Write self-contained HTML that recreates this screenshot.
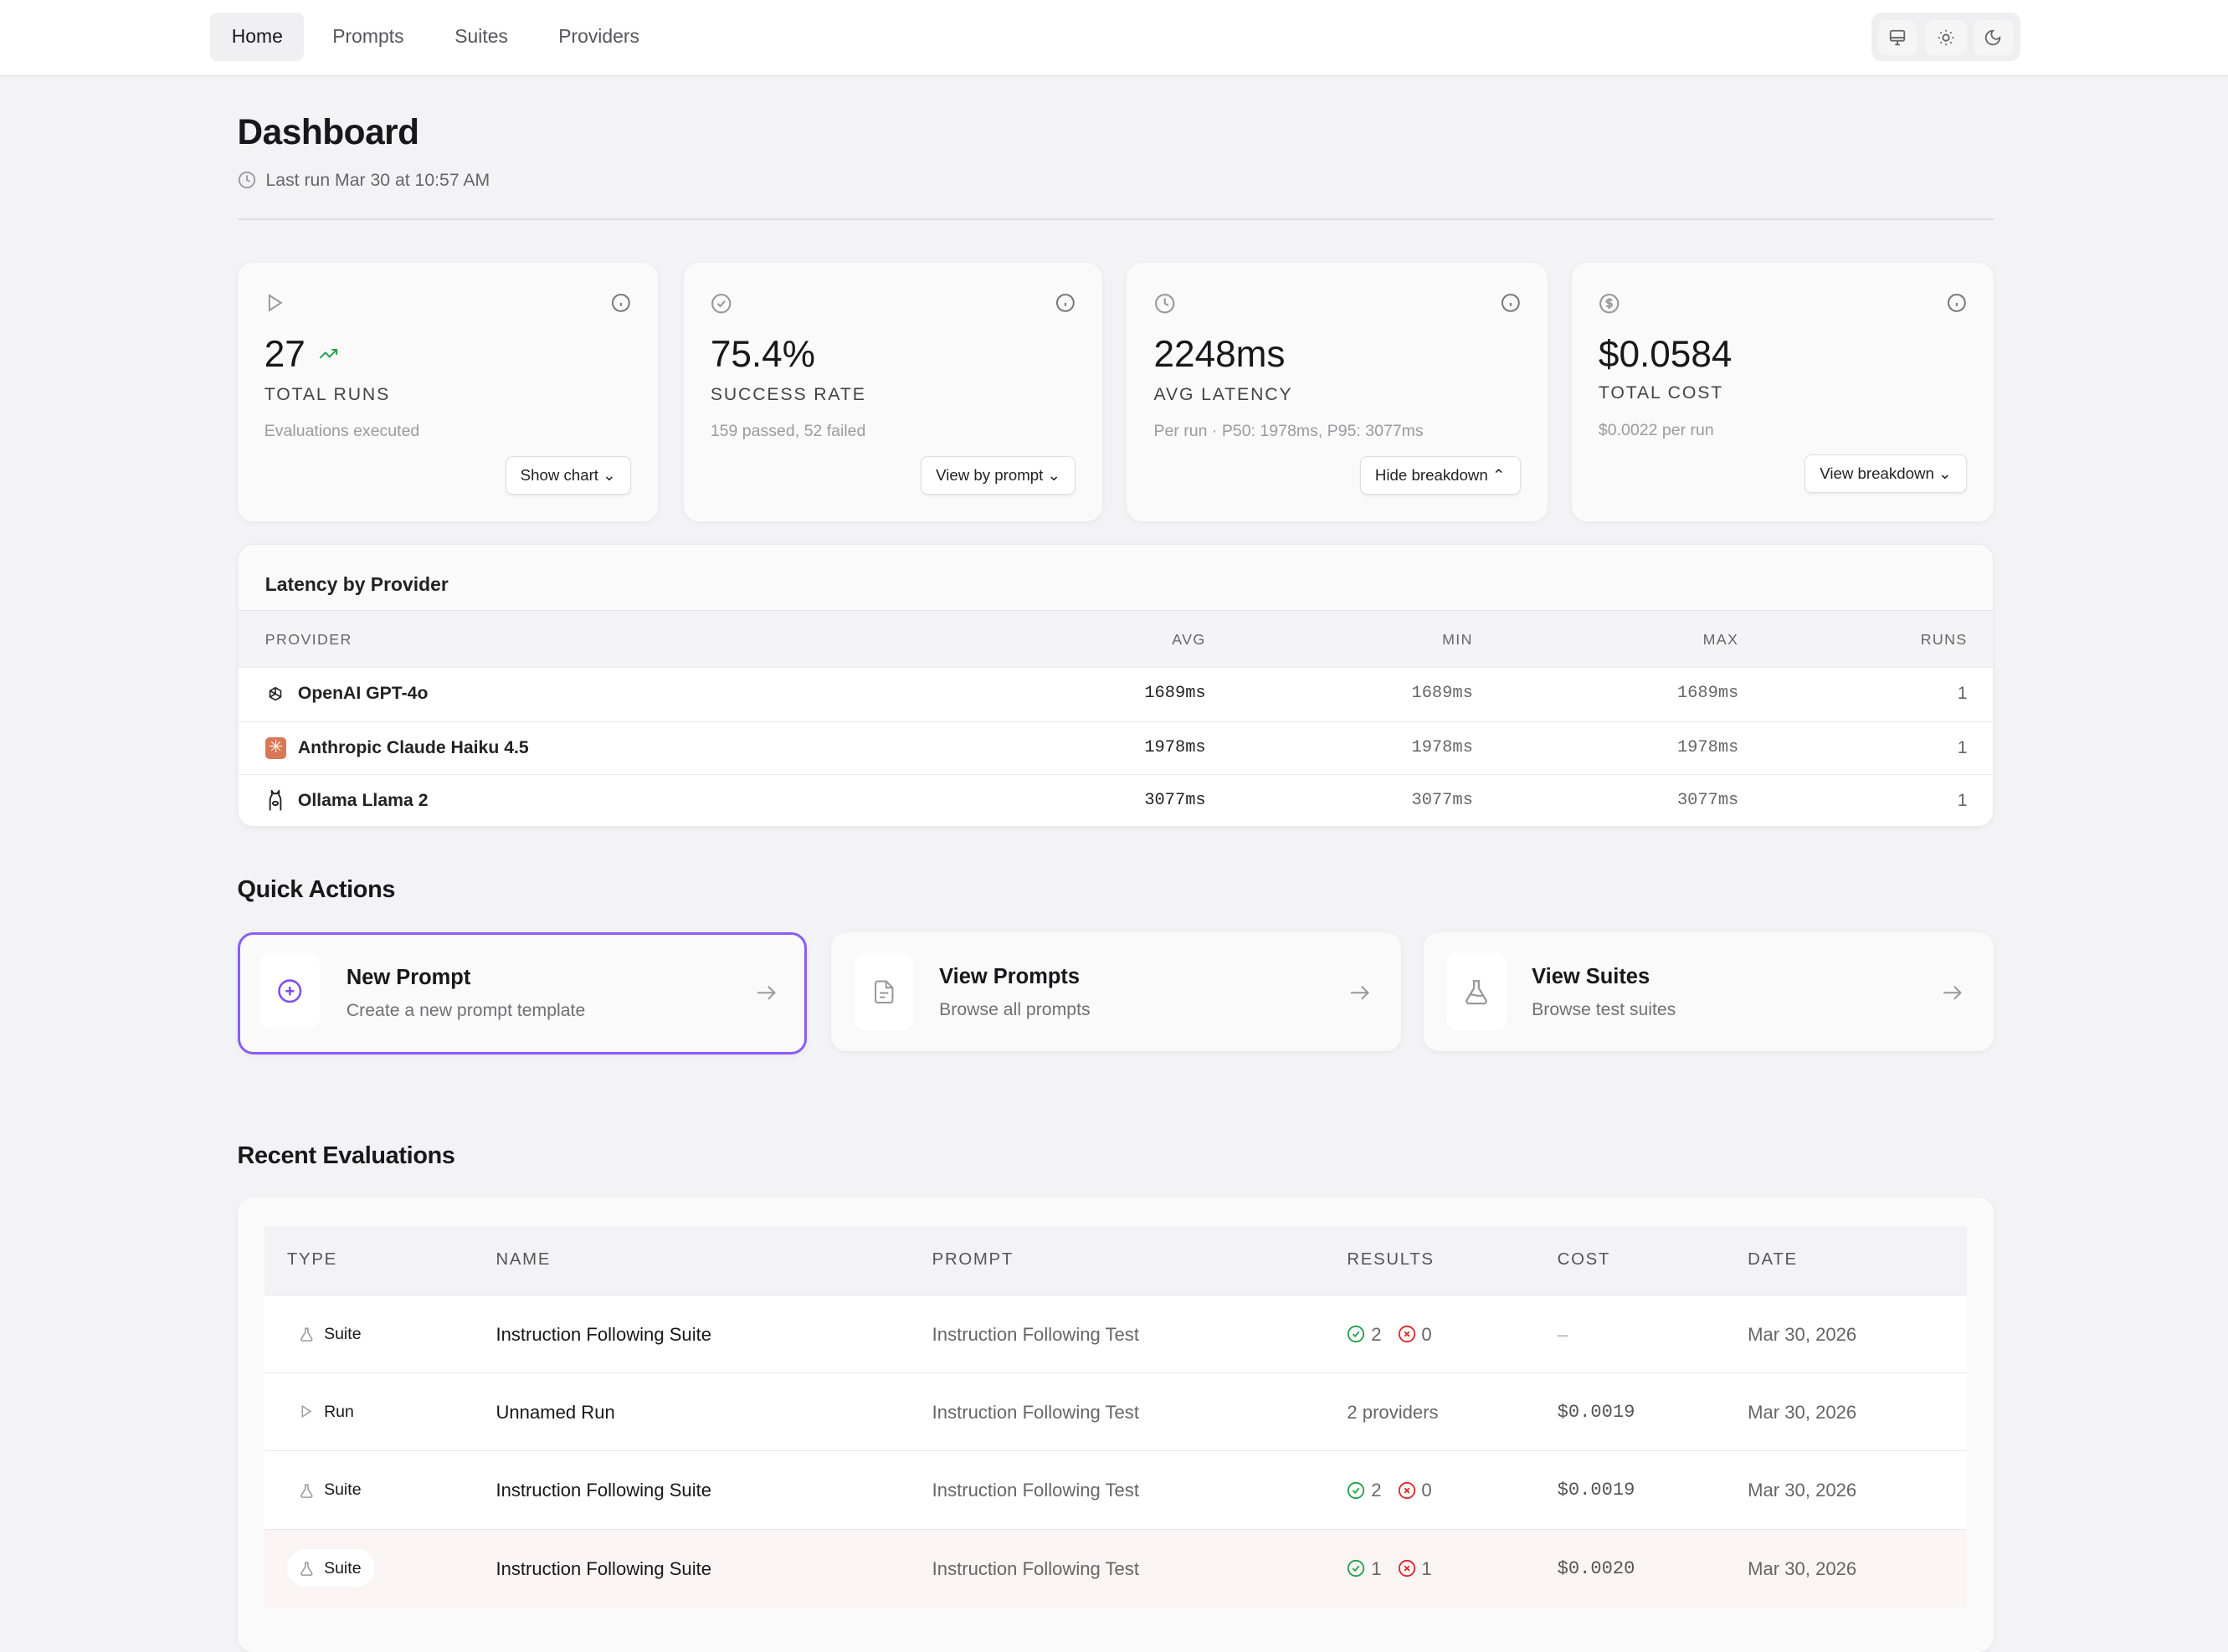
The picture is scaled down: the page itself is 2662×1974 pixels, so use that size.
<!DOCTYPE html>
<html><head><meta charset="utf-8">
<style>
html,body{margin:0;padding:0}
body{width:1568px;height:1129px;overflow:hidden;zoom:1.69770;background:#f3f3f5;font-family:"Liberation Sans",sans-serif;color:#18181b;position:relative}
.a{position:absolute}
svg{display:block}
.nav{left:0;top:0;width:1568px;height:53px;background:#fff;border-bottom:1px solid #dcdcdf}
.nl{top:9px;height:34px;line-height:34px;font-size:13.5px;color:#55555c}
.card{background:#fafafa;border-radius:11px;box-shadow:0 1px 4px rgba(0,0,0,.05)}
.stat .big{position:absolute;left:19px;top:50px;font-size:26px;color:#18181b}
.stat .lbl{position:absolute;left:19px;top:86px;font-size:12.5px;letter-spacing:1.1px;color:#444}
.stat .sub{position:absolute;left:19px;top:112px;font-size:11.5px;color:#9a9aa0}
.stat .btn{position:absolute;right:19px;top:136px;height:26px;line-height:26px;padding:0 10px;font-size:11px;background:#fff;border:1px solid #dedee2;border-radius:5px;box-shadow:0 1px 2px rgba(0,0,0,.06);color:#222}
.ic{position:absolute;top:21px}
.th{font-size:10.5px;letter-spacing:.8px;color:#666}
.mono{font-family:"Liberation Mono",monospace}
.row{position:absolute;left:0;width:1236px;height:37px;background:#fff;border-top:1px solid #ececef;font-size:12.5px;line-height:37px}
.qa{top:656px;height:84px;width:401px}
.qa .t{position:absolute;left:76px;top:23px;font-size:15px;font-weight:bold;color:#18181b}
.qa .s{position:absolute;left:76px;top:48px;font-size:12.5px;color:#707075}
.qa .ib{position:absolute;left:16px;top:15px;width:42px;height:54px;background:#fff;border-radius:8px}
.qa .ar{position:absolute;right:20px;top:34px}
.er{position:absolute;left:19px;width:1198px;height:55px;background:#fff;border-top:1px solid #e6e6e9;font-size:13px;line-height:55px}
.er span{position:absolute;top:0}
.er svg.fl{position:absolute;left:24px;top:22px}
.res{position:absolute;top:0;left:762px;color:#666;display:flex;align-items:center;height:55px;gap:4px}
</style></head><body>
<svg width="0" height="0" style="position:absolute"><defs>
<symbol id="flask" viewBox="0 0 24 24"><path d="M9 3h6M10 3v6L4 19a2 2 0 0 0 2 3h12a2 2 0 0 0 2-3l-6-10V3" fill="none" stroke="#999" stroke-width="2"/></symbol>
<symbol id="ok" viewBox="0 0 24 24"><circle cx="12" cy="12" r="10" fill="none" stroke="#22a04a" stroke-width="2"/><path d="M8 12l3 3 5-6" fill="none" stroke="#22a04a" stroke-width="2"/></symbol>
<symbol id="no" viewBox="0 0 24 24"><circle cx="12" cy="12" r="10" fill="none" stroke="#dc2626" stroke-width="2"/><path d="M9 9l6 6M15 9l-6 6" fill="none" stroke="#dc2626" stroke-width="2"/></symbol>
</defs></svg>
<div class="a nav">
 <div class="a nl" style="left:148px;width:66px;background:#f0f0f2;border-radius:5px;text-align:center;color:#18181b">Home</div>
 <div class="a nl" style="left:234px">Prompts</div>
 <div class="a nl" style="left:320px">Suites</div>
 <div class="a nl" style="left:393px">Providers</div>
 <div class="a" style="left:1317px;top:9px;width:105px;height:34px;background:#efeff1;border-radius:7px">
  <div class="a" style="left:5px;top:5px;width:27px;height:25px;background:#f5f5f6;border-radius:6px"><svg class="a" style="left:7px;top:6px" width="13" height="13" viewBox="0 0 24 24" fill="none" stroke="#666" stroke-width="2"><rect x="3" y="3" width="18" height="13" rx="2"/><path d="M3 12h18M9 21h6M12 16v5"/></svg></div>
  <div class="a" style="left:38px;top:5px;width:29px;height:25px;background:#f5f5f6;border-radius:6px"><svg class="a" style="left:8px;top:6px" width="13" height="13" viewBox="0 0 24 24" fill="none" stroke="#666" stroke-width="2"><circle cx="12" cy="12" r="4"/><path d="M12 2v2M12 20v2M4.9 4.9l1.4 1.4M17.7 17.7l1.4 1.4M2 12h2M20 12h2M4.9 19.1l1.4-1.4M17.7 6.3l1.4-1.4"/></svg></div>
  <div class="a" style="left:72px;top:5px;width:28px;height:25px;background:#f5f5f6;border-radius:6px"><svg class="a" style="left:7px;top:6px" width="13" height="13" viewBox="0 0 24 24" fill="none" stroke="#666" stroke-width="2"><path d="M12 3a6 6 0 0 0 9 9 9 9 0 1 1-9-9z"/></svg></div>
 </div>
</div>

<div class="a" style="left:167px;top:79px;font-size:25px;font-weight:bold;letter-spacing:-.3px">Dashboard</div>
<svg class="a" style="left:167px;top:120px" width="13" height="13" viewBox="0 0 24 24" fill="none" stroke="#999" stroke-width="2"><circle cx="12" cy="12" r="10"/><path d="M12 6v6l4 2"/></svg>
<div class="a" style="left:187px;top:120px;font-size:12.5px;color:#666">Last run Mar 30 at 10:57 AM</div>
<div class="a" style="left:167px;top:154px;width:1236px;height:1px;background:#dcdcdf"></div>

<div class="a card stat" style="left:167px;top:185px;width:296px;height:182px">
 <svg class="ic" style="left:19px" width="14" height="14" viewBox="0 0 24 24" fill="none" stroke="#999" stroke-width="2"><path d="M6 3l14 9-14 9z"/></svg>
 <svg class="ic" style="right:19px" width="14" height="14" viewBox="0 0 24 24" fill="none" stroke="#777" stroke-width="2"><circle cx="12" cy="12" r="10"/><path d="M12 16v-4M12 8h0"/></svg>
 <div class="big">27 <svg style="display:inline-block;vertical-align:2px" width="18" height="14" viewBox="0 0 24 24" fill="none" stroke="#22a04a" stroke-width="2"><path d="M22 7l-8.5 8.5-5-5L2 17M16 7h6v6"/></svg></div>
 <div class="lbl">TOTAL RUNS</div><div class="sub">Evaluations executed</div>
 <div class="btn">Show chart &#8964;</div>
</div>
<div class="a card stat" style="left:481px;top:185px;width:295px;height:182px">
 <svg class="ic" style="left:19px" width="15" height="15" viewBox="0 0 24 24" fill="none" stroke="#999" stroke-width="2"><circle cx="12" cy="12" r="10"/><path d="M8 12l3 3 5-6"/></svg>
 <svg class="ic" style="right:19px" width="14" height="14" viewBox="0 0 24 24" fill="none" stroke="#777" stroke-width="2"><circle cx="12" cy="12" r="10"/><path d="M12 16v-4M12 8h0"/></svg>
 <div class="big">75.4%</div><div class="lbl">SUCCESS RATE</div><div class="sub">159 passed, 52 failed</div>
 <div class="btn">View by prompt &#8964;</div>
</div>
<div class="a card stat" style="left:793px;top:185px;width:296px;height:182px">
 <svg class="ic" style="left:19px" width="15" height="15" viewBox="0 0 24 24" fill="none" stroke="#999" stroke-width="2"><circle cx="12" cy="12" r="10"/><path d="M12 6v6l4 2"/></svg>
 <svg class="ic" style="right:19px" width="14" height="14" viewBox="0 0 24 24" fill="none" stroke="#777" stroke-width="2"><circle cx="12" cy="12" r="10"/><path d="M12 16v-4M12 8h0"/></svg>
 <div class="big">2248ms</div><div class="lbl">AVG LATENCY</div><div class="sub">Per run · P50: 1978ms, P95: 3077ms</div>
 <div class="btn">Hide breakdown &#8963;</div>
</div>
<div class="a card stat" style="left:1106px;top:185px;width:297px;height:182px">
 <svg class="ic" style="left:19px" width="15" height="15" viewBox="0 0 24 24" fill="none" stroke="#999" stroke-width="2"><circle cx="12" cy="12" r="10"/><path d="M15 9a3 2 0 0 0-3-1.5c-2 0-3 1-3 2s1 1.7 3 2 3 1 3 2-1 2-3 2a3 2 0 0 1-3-1.5M12 6v12"/></svg>
 <svg class="ic" style="right:19px" width="14" height="14" viewBox="0 0 24 24" fill="none" stroke="#777" stroke-width="2"><circle cx="12" cy="12" r="10"/><path d="M12 16v-4M12 8h0"/></svg>
 <div class="big">$0.0584</div><div class="lbl" style="top:85px">TOTAL COST</div><div class="sub" style="top:111px">$0.0022 per run</div>
 <div class="btn" style="top:135px">View breakdown &#8964;</div>
</div>

<div class="a card" style="left:167px;top:383px;width:1236px;height:199px;overflow:hidden;border:1px solid #ebebee;box-sizing:border-box">
 <div class="a" style="left:19px;top:20px;font-size:13.5px;font-weight:bold;color:#222">Latency by Provider</div>
 <div class="a" style="left:0;top:46px;width:1236px;height:39px;background:#f4f4f6;border-top:1px solid #e4e4e7;border-bottom:1px solid #e4e4e7">
  <span class="a th" style="left:19px;top:14px">PROVIDER</span>
  <span class="a th" style="right:555px;top:14px">AVG</span>
  <span class="a th" style="right:367px;top:14px">MIN</span>
  <span class="a th" style="right:180px;top:14px">MAX</span>
  <span class="a th" style="right:19px;top:14px">RUNS</span>
 </div>
 <div class="row" style="top:86px">
  <svg class="a" style="left:20px;top:12px" width="13" height="13" viewBox="0 0 24 24" fill="none" stroke="#222" stroke-width="1.8"><path d="M12 3l7 4v8l-7 4-7-4V7z"/><path d="M12 3v8l7 4M5 7l7 4M5 15l7-4"/></svg>
  <span class="a" style="left:42px;font-weight:bold;color:#222">OpenAI GPT-4o</span>
  <span class="a mono" style="right:555px;color:#222;font-size:12px">1689ms</span>
  <span class="a mono" style="right:367px;color:#666;font-size:12px">1689ms</span>
  <span class="a mono" style="right:180px;color:#666;font-size:12px">1689ms</span>
  <span class="a" style="right:19px;color:#666">1</span>
 </div>
 <div class="row" style="top:124px">
  <div class="a" style="left:19px;top:11px;width:15px;height:15px;background:#d97757;border-radius:3px;color:#fff;font-size:12px;line-height:15px;text-align:center">✳</div>
  <span class="a" style="left:42px;font-weight:bold;color:#222">Anthropic Claude Haiku 4.5</span>
  <span class="a mono" style="right:555px;color:#222;font-size:12px">1978ms</span>
  <span class="a mono" style="right:367px;color:#666;font-size:12px">1978ms</span>
  <span class="a mono" style="right:180px;color:#666;font-size:12px">1978ms</span>
  <span class="a" style="right:19px;color:#666">1</span>
 </div>
 <div class="row" style="top:161px">
  <svg class="a" style="left:20px;top:11px" width="13" height="15" viewBox="0 0 20 24" fill="none" stroke="#222" stroke-width="1.8"><path d="M4 23V12c0-3 1-5 2-6V1l2 3h4l2-3v5c1 1 2 3 2 6v11"/><ellipse cx="10" cy="15" rx="3" ry="2"/></svg>
  <span class="a" style="left:42px;font-weight:bold;color:#222">Ollama Llama 2</span>
  <span class="a mono" style="right:555px;color:#222;font-size:12px">3077ms</span>
  <span class="a mono" style="right:367px;color:#666;font-size:12px">3077ms</span>
  <span class="a mono" style="right:180px;color:#666;font-size:12px">3077ms</span>
  <span class="a" style="right:19px;color:#666">1</span>
 </div>
</div>

<div class="a" style="left:167px;top:617px;font-size:17px;font-weight:bold;letter-spacing:-.2px">Quick Actions</div>
<div class="a card qa" style="left:167px;border:2px solid #8b5cf6;box-sizing:border-box;height:86px">
 <div class="ib" style="left:14px;top:13px"><svg class="a" style="left:12px;top:18px" width="18" height="18" viewBox="0 0 24 24" fill="none" stroke="#7c4dee" stroke-width="2"><circle cx="12" cy="12" r="10"/><path d="M12 8v8M8 12h8"/></svg></div>
 <div class="t" style="left:75px;top:22px">New Prompt</div><div class="s" style="left:75px;top:47px">Create a new prompt template</div>
 <svg class="ar" style="right:18px;top:32px" width="18" height="18" viewBox="0 0 24 24" fill="none" stroke="#999" stroke-width="1.6"><path d="M4 12h16M14 6l6 6-6 6"/></svg>
</div>
<div class="a card qa" style="left:585px">
 <div class="ib"><svg class="a" style="left:12px;top:18px" width="18" height="18" viewBox="0 0 24 24" fill="none" stroke="#999" stroke-width="1.6"><path d="M14 2H6a2 2 0 0 0-2 2v16a2 2 0 0 0 2 2h12a2 2 0 0 0 2-2V8z"/><path d="M14 2v6h6M8 13h8M8 17h5"/></svg></div>
 <div class="t">View Prompts</div><div class="s">Browse all prompts</div>
 <svg class="ar" width="18" height="18" viewBox="0 0 24 24" fill="none" stroke="#999" stroke-width="1.6"><path d="M4 12h16M14 6l6 6-6 6"/></svg>
</div>
<div class="a card qa" style="left:1002px">
 <div class="ib"><svg class="a" style="left:11px;top:17px" width="20" height="20" viewBox="0 0 24 24" fill="none" stroke="#999" stroke-width="1.6"><path d="M9 3h6M10 3v6L4 19a2 2 0 0 0 2 3h12a2 2 0 0 0 2-3l-6-10V3"/><path d="M6 15c3-2 6 2 12 0"/></svg></div>
 <div class="t">View Suites</div><div class="s">Browse test suites</div>
 <svg class="ar" width="18" height="18" viewBox="0 0 24 24" fill="none" stroke="#999" stroke-width="1.6"><path d="M4 12h16M14 6l6 6-6 6"/></svg>
</div>

<div class="a" style="left:167px;top:804px;font-size:17px;font-weight:bold;letter-spacing:-.2px">Recent Evaluations</div>
<div class="a card" style="left:167px;top:843px;width:1236px;height:320px">
 <div class="a" style="left:19px;top:20px;width:1198px;height:48px;background:#f3f3f5;border-bottom:1px solid #dcdcdf;font-size:12px;letter-spacing:1px;color:#555;line-height:48px">
  <span class="a" style="left:16px">TYPE</span><span class="a" style="left:163px">NAME</span><span class="a" style="left:470px">PROMPT</span><span class="a" style="left:762px">RESULTS</span><span class="a" style="left:910px">COST</span><span class="a" style="left:1044px">DATE</span>
 </div>
 <div class="er" style="top:68px"><svg class="fl" width="11" height="11"><use href="#flask"/></svg><span style="left:42px;font-size:11.5px">Suite</span><span style="left:163px">Instruction Following Suite</span><span style="left:470px;color:#666">Instruction Following Test</span><div class="res"><svg width="13" height="13"><use href="#ok"/></svg>2&nbsp;&nbsp;<svg width="13" height="13"><use href="#no"/></svg>0</div><span style="left:910px;color:#aaa">–</span><span style="left:1044px;color:#666">Mar 30, 2026</span></div>
 <div class="er" style="top:123px"><svg class="fl" width="10" height="10" viewBox="0 0 24 24" fill="none" stroke="#999" stroke-width="2"><path d="M6 3l14 9-14 9z"/></svg><span style="left:42px;font-size:11.5px">Run</span><span style="left:163px">Unnamed Run</span><span style="left:470px;color:#666">Instruction Following Test</span><span style="left:762px;color:#666">2 providers</span><span class="mono" style="left:910px;color:#555">$0.0019</span><span style="left:1044px;color:#666">Mar 30, 2026</span></div>
 <div class="er" style="top:178px"><svg class="fl" width="11" height="11"><use href="#flask"/></svg><span style="left:42px;font-size:11.5px">Suite</span><span style="left:163px">Instruction Following Suite</span><span style="left:470px;color:#666">Instruction Following Test</span><div class="res"><svg width="13" height="13"><use href="#ok"/></svg>2&nbsp;&nbsp;<svg width="13" height="13"><use href="#no"/></svg>0</div><span class="mono" style="left:910px;color:#555">$0.0019</span><span style="left:1044px;color:#666">Mar 30, 2026</span></div>
 <div class="er" style="top:233px;background:#fbf4f4"><span style="left:16px;top:14px;height:26px;width:62px;background:#fff;border-radius:13px"></span><svg class="fl" width="11" height="11"><use href="#flask"/></svg><span style="left:42px;font-size:11.5px">Suite</span><span style="left:163px">Instruction Following Suite</span><span style="left:470px;color:#666">Instruction Following Test</span><div class="res"><svg width="13" height="13"><use href="#ok"/></svg>1&nbsp;&nbsp;<svg width="13" height="13"><use href="#no"/></svg>1</div><span class="mono" style="left:910px;color:#555">$0.0020</span><span style="left:1044px;color:#666">Mar 30, 2026</span></div>
</div>
</body></html>
